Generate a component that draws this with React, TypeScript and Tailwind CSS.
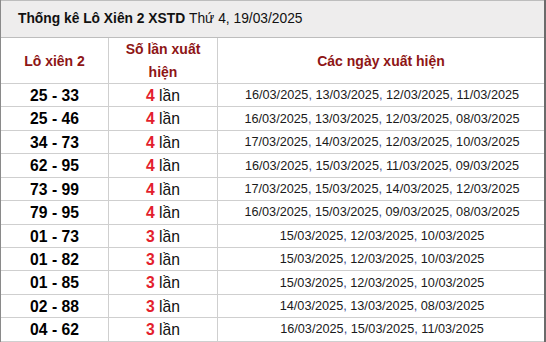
import React from "react";

const rows: [string, number, string[]][] = [
  ["25 - 33", 4, ["16/03/2025", "13/03/2025", "12/03/2025", "11/03/2025"]],
  ["25 - 46", 4, ["16/03/2025", "13/03/2025", "12/03/2025", "08/03/2025"]],
  ["34 - 73", 4, ["17/03/2025", "14/03/2025", "12/03/2025", "10/03/2025"]],
  ["62 - 95", 4, ["16/03/2025", "15/03/2025", "11/03/2025", "09/03/2025"]],
  ["73 - 99", 4, ["17/03/2025", "15/03/2025", "14/03/2025", "12/03/2025"]],
  ["79 - 95", 4, ["16/03/2025", "15/03/2025", "09/03/2025", "08/03/2025"]],
  ["01 - 73", 3, ["15/03/2025", "12/03/2025", "10/03/2025"]],
  ["01 - 82", 3, ["15/03/2025", "12/03/2025", "10/03/2025"]],
  ["01 - 85", 3, ["15/03/2025", "12/03/2025", "10/03/2025"]],
  ["02 - 88", 3, ["14/03/2025", "13/03/2025", "08/03/2025"]],
  ["04 - 62", 3, ["16/03/2025", "15/03/2025", "11/03/2025"]],
];

export default function App() {
  return (
    <div
      className="w-[546px] h-[342px] overflow-hidden bg-white border-l border-r-2 border-l-[#8a8a8a] border-r-[#6b6b6b] text-black"
      style={{ fontFamily: '"Liberation Sans", Arial, sans-serif' }}
    >
      <div className="h-[38px] bg-[#eeeded] border-t border-b border-[#bdbdbd] flex items-center pl-[17px] text-[13.8px] text-[#111]">
        <span className="font-bold">Thống kê Lô Xiên 2 XSTD</span>
        <span>&nbsp;Thứ 4, 19/03/2025</span>
      </div>
      <div className="h-[46px] grid grid-cols-[108px_109px_1fr] border-b border-[#cfcfcf] text-[14px] font-bold text-[#8e1515]">
        <div className="flex items-center justify-center border-r border-[#cfcfcf]">Lô xiên 2</div>
        <div className="flex items-center justify-center text-center leading-[23px] border-r border-[#cfcfcf]">
          <span>
            Số lần xuất
            <br />
            hiện
          </span>
        </div>
        <div className="flex items-center justify-center">Các ngày xuất hiện</div>
      </div>
      {rows.map(([pair, n, dates]) => (
        <div
          key={pair}
          className="h-[23.43px] grid grid-cols-[108px_109px_1fr] border-b border-[#cfcfcf]"
        >
          <div className="flex items-center justify-center border-r border-[#cfcfcf] font-bold text-[15.7px] text-black">
            {pair}
          </div>
          <div className="flex items-center justify-center border-r border-[#cfcfcf] text-[15.7px] text-[#111]">
            <span className="font-bold text-[#e31e2d]">{n}</span>
            <span>&nbsp;lần</span>
          </div>
          <div className="flex items-center justify-center text-[12.7px] text-[#1a1a1a] pl-[2px]">
            {dates.map((d, i) => (
              <React.Fragment key={i}>
                {i > 0 && <span className="text-[#3c4a8c] whitespace-pre">, </span>}
                <span>{d}</span>
              </React.Fragment>
            ))}
          </div>
        </div>
      ))}
    </div>
  );
}
